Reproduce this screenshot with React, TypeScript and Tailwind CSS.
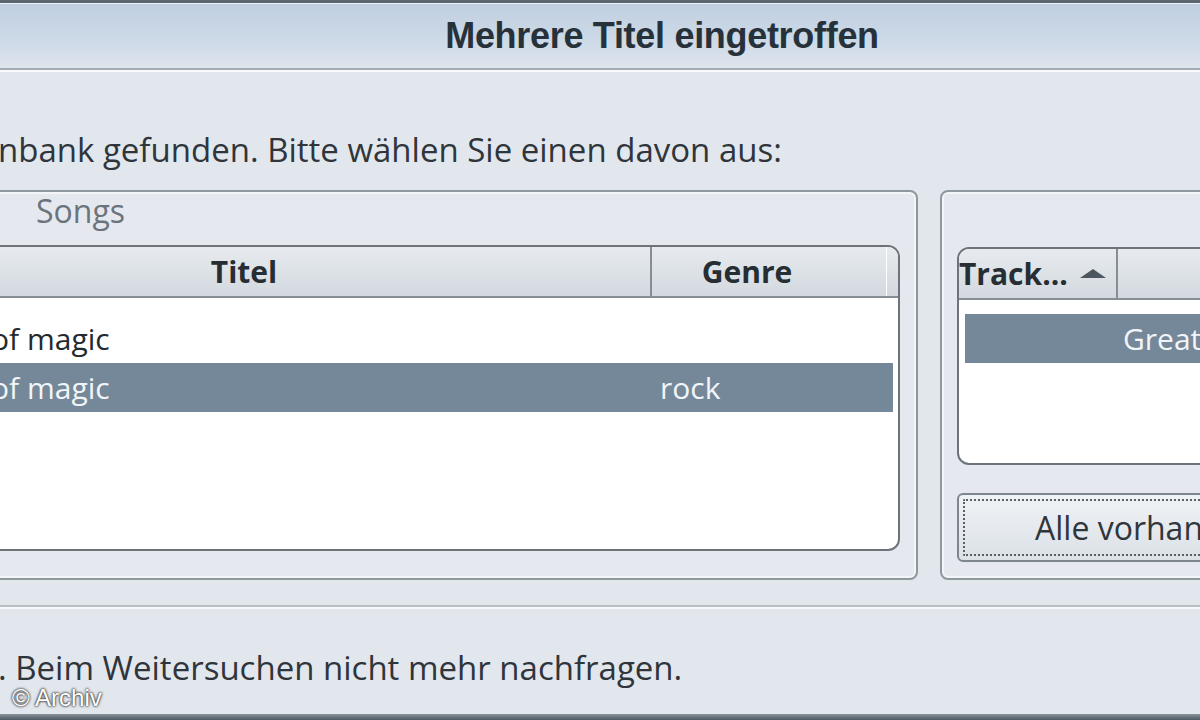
import React from 'react';

const songs = [
  { title: 'of magic', genre: '', selected: false },
  { title: 'of magic', genre: 'rock', selected: true },
];

function SortArrow() {
  return (
    <svg width="26" height="10" viewBox="0 0 26 10" className="ml-[12px] shrink-0">
      <polygon points="13,0 26,9 0,9" fill="#4c565e" />
    </svg>
  );
}

export default function App() {
  return (
    <div className="relative w-[1200px] h-[720px] overflow-hidden bg-[#e2e7ee] flex flex-col font-['Open_Sans',sans-serif] text-[#2f353b]">
      {/* Window top edge */}
      <div className="h-[3px] bg-[#5b6670]" />

      {/* Title bar */}
      <div className="h-[65px] bg-gradient-to-b from-[#c0cfe0] via-[#cbd8e6] to-[#dde4ed] border-t border-[#eef3f8] flex items-center justify-center pl-[124px]">
        <h1 className="font-['Liberation_Sans',Arial,sans-serif] font-bold text-[36px] leading-none text-[#27313a] tracking-[-0.3px]">
          Mehrere Titel eingetroffen
        </h1>
      </div>
      <div className="h-[2px] bg-[#a2abb4]" />
      <div className="h-[2px] bg-[#f7f9fb]" />

      <main className="flex-1 flex flex-col">
        <p className="mt-[60px] ml-[-2px] text-[33px] leading-[36px] whitespace-nowrap">
          nbank gefunden. Bitte wählen Sie einen davon aus:
        </p>

        <div className="mt-[22px] ml-[-30px] flex gap-[22px] h-[390px]">
          {/* Songs group */}
          <section className="w-[948px] shrink-0 flex flex-col rounded-[8px] border-2 border-[#8f989f] shadow-[inset_0_0_0_2px_#f3f5f8] bg-[#e5e9ef]">
            <div className="h-[53px] pl-[64px] pt-[1px] text-[32px] leading-[36px] text-[#6b747c]">Songs</div>
            <div className="ml-[10px] mr-[16px] h-[306px] rounded-[12px] border-2 border-[#6c7379] bg-white overflow-hidden flex flex-col">
              <div className="h-[51px] shrink-0 flex bg-gradient-to-b from-[#e7ebef] to-[#d3d9df] border-b-2 border-[#868d93] font-bold text-[30px] leading-[49px] text-[#262d33]">
                <div className="w-[668px] shrink-0 text-center pr-[146px] border-r-2 border-[#868d93]">Titel</div>
                <div className="w-[234px] shrink-0 text-center pr-[44px]">Genre</div>
                <div className="flex-1 border-l border-white" />
              </div>
              <div className="pt-[16px] flex flex-col">
                {songs.map((s, i) => (
                  <div
                    key={i}
                    className={`h-[49px] mr-[5px] flex items-center text-[30px] ${s.selected ? 'bg-[#74889a] text-[#f2f5f8]' : 'text-[#24292e]'}`}
                  >
                    <div className="w-[670px] shrink-0 pl-[7px] whitespace-nowrap">{s.title}</div>
                    <div className="pl-[6px] whitespace-nowrap">{s.genre}</div>
                  </div>
                ))}
              </div>
            </div>
          </section>

          {/* Album group */}
          <section className="flex-1 min-w-[300px] flex flex-col rounded-[8px] border-2 border-[#8f989f] shadow-[inset_0_0_0_2px_#f3f5f8] bg-[#e5e9ef] pl-[15px]">
            <div className="h-[55px] shrink-0" />
            <div className="h-[218px] rounded-[12px] border-2 border-[#6c7379] bg-white overflow-hidden flex flex-col">
              <div className="h-[51px] shrink-0 flex bg-gradient-to-b from-[#e7ebef] to-[#d3d9df] border-b-2 border-[#868d93] font-bold text-[30px] leading-[49px] text-[#262d33]">
                <div className="w-[159px] shrink-0 flex items-center border-r-2 border-[#868d93] whitespace-nowrap">
                  <span>Track...</span>
                  <SortArrow />
                </div>
                <div className="flex-1" />
              </div>
              <div className="pt-[14px]">
                <div className="h-[49px] ml-[6px] bg-[#74889a] text-[#f2f5f8] text-[30px] flex items-center">
                  <div className="w-[151px] shrink-0" />
                  <div className="pl-[7px] whitespace-nowrap">Greatest Hits</div>
                </div>
              </div>
            </div>
            <button className="mt-[28px] h-[69px] rounded-[6px] border-2 border-[#7e868d] bg-gradient-to-b from-[#f0f3f6] to-[#dbe1e7] p-[4px] flex text-left">
              <span className="flex-1 h-full border-2 border-dotted border-[#5a5f64] rounded-[2px] flex items-center pl-[70px] text-[32px] text-[#30363c] whitespace-nowrap">
                Alle vorhandenen übernehmen
              </span>
            </button>
          </section>
        </div>

        <div className="mt-[25px] h-[2px] bg-[#b5bdc5]" />
        <div className="h-[2px] bg-[#f7f9fb]" />

        <p className="mt-[43px] ml-[-2px] text-[33px] leading-[32px] whitespace-nowrap">
          . Beim Weitersuchen nicht mehr nachfragen.
        </p>
      </main>

      {/* Window bottom edge */}
      <div className="h-[6px] bg-gradient-to-b from-[#8a939b] to-[#4f5961]" />

      {/* Photo credit */}
      <span className="absolute left-[12px] top-[686px] font-['Liberation_Sans',Arial,sans-serif] text-[24px] leading-[24px] text-white [text-shadow:0_0_3px_#222,0_0_2px_#222]">
        © Archiv
      </span>
    </div>
  );
}
